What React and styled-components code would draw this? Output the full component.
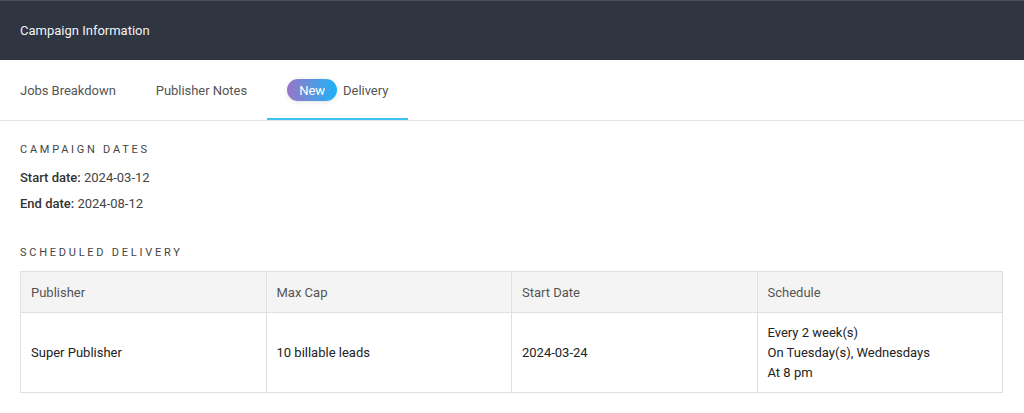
import React from "react";
import styled, { createGlobalStyle } from "styled-components";

const Global = createGlobalStyle`
  html, body { margin: 0; padding: 0; background: #fff; }
  body { font-family: Roboto, "Noto Sans", Arial, sans-serif; -webkit-font-smoothing: antialiased; }
  * { box-sizing: border-box; }
`;

const Header = styled.header`
  height: 60px;
  background: #2f3541;
  border-top: 1px solid #4b515c;
  display: flex;
  align-items: center;
  padding: 0 20px;
  color: #f2f3f5;
  font-size: 13px;
`;

const TabBar = styled.nav`
  display: flex;
  border-bottom: 1px solid #e2e2e2;
`;

const Tab = styled.div`
  height: 60px;
  padding: 2px 20px 0;
  display: flex;
  align-items: center;
  gap: 6px;
  font-size: 13px;
  letter-spacing: -0.04px;
  color: #555;
  border-bottom: 2px solid ${p => (p.$active ? "#3ec1f5" : "transparent")};
`;

const Badge = styled.span`
  display: inline-flex;
  align-items: center;
  justify-content: center;
  width: 50px;
  height: 22px;
  border-radius: 11px;
  background: linear-gradient(90deg, #9a74c6 0%, #5b95e0 50%, #1db2f7 100%);
  color: #fff;
  font-size: 13px;
  letter-spacing: 0;
  box-shadow: 0 1px 4px rgba(0, 0, 0, 0.12);
`;

const Content = styled.main`
  padding: 21px 20px 20px;
`;

const SectionTitle = styled.h3`
  margin: 0;
  font-size: 11px;
  font-weight: 400;
  line-height: 16px;
  letter-spacing: 2.75px;
  color: #444;
  text-transform: uppercase;
  margin-top: ${p => p.$mt || 0}px;
`;

const DateList = styled.div`
  display: flex;
  flex-direction: column;
  gap: 6px;
  margin-top: 10px;
`;

const DateLine = styled.div`
  font-size: 13px;
  line-height: 20px;
  color: #444;
  b { font-weight: 500; color: #333; }
`;

const Table = styled.table`
  width: 100%;
  max-width: 983px;
  margin-top: 10px;
  border-collapse: collapse;
  table-layout: fixed;
  font-size: 13px;
`;

const Th = styled.th`
  height: 41px;
  background: #f4f4f4;
  border: 1px solid #e0e0e0;
  text-align: left;
  font-weight: 400;
  color: #555;
  padding: 0 10px;
`;

const Td = styled.td`
  height: 80px;
  border: 1px solid #e0e0e0;
  padding: 0 10px;
  color: #222;
  line-height: 20px;
  vertical-align: middle;
`;

const rows = [
  {
    publisher: "Super Publisher",
    cap: "10 billable leads",
    start: "2024-03-24",
    schedule: ["Every 2 week(s)", "On Tuesday(s), Wednesdays", "At 8 pm"],
  },
];

export default function App() {
  return (
    <>
      <Global />
      <Header>Campaign Information</Header>
      <TabBar>
        <Tab>Jobs Breakdown</Tab>
        <Tab>Publisher Notes</Tab>
        <Tab $active>
          <Badge>New</Badge>
          Delivery
        </Tab>
      </TabBar>
      <Content>
        <SectionTitle>Campaign Dates</SectionTitle>
        <DateList>
          <DateLine><b>Start date:</b> 2024-03-12</DateLine>
          <DateLine><b>End date:</b> 2024-08-12</DateLine>
        </DateList>
        <SectionTitle $mt={31}>Scheduled Delivery</SectionTitle>
        <Table>
          <thead>
            <tr>
              <Th>Publisher</Th>
              <Th>Max Cap</Th>
              <Th>Start Date</Th>
              <Th>Schedule</Th>
            </tr>
          </thead>
          <tbody>
            {rows.map((r, i) => (
              <tr key={i}>
                <Td>{r.publisher}</Td>
                <Td>{r.cap}</Td>
                <Td>{r.start}</Td>
                <Td>
                  {r.schedule.map((s, j) => (
                    <div key={j}>{s}</div>
                  ))}
                </Td>
              </tr>
            ))}
          </tbody>
        </Table>
      </Content>
    </>
  );
}
